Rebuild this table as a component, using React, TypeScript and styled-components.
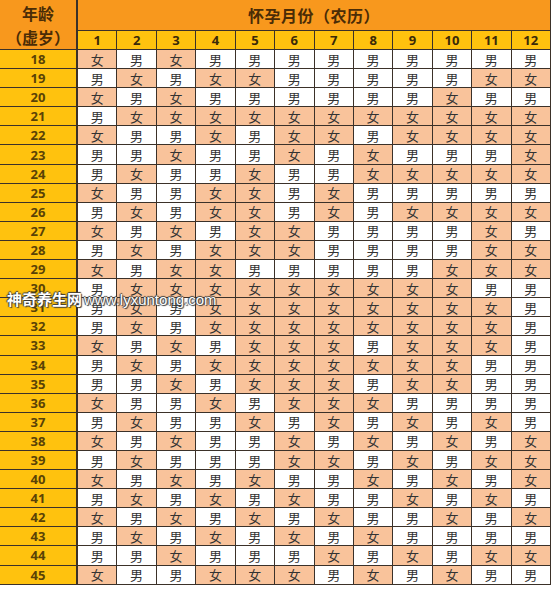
import React from "react";
import styled, { createGlobalStyle } from "styled-components";

const GlobalStyle = createGlobalStyle`
  html, body {
    margin: 0;
    padding: 0;
    background: #ffffff;
  }
  body {
    font-family: "Noto Sans CJK SC", "Noto Sans", sans-serif;
  }
`;

// F = 女, M = 男 — one string per age, months 1..12
const chart: [number, string][] = [
  [18, "FMFMMMMMMMMM"],
  [19, "MFMFFMMMMMFF"],
  [20, "FMFMMMMMMFMM"],
  [21, "MFFFFFFFFFFF"],
  [22, "FMMFMFFMFFFF"],
  [23, "MMFMMFMFMMMF"],
  [24, "MFMMFMMFFFFF"],
  [25, "FMMFFMFMMMMM"],
  [26, "MFMFFMFMFFFF"],
  [27, "FMFMFFMMMMFM"],
  [28, "MFMFFFMMMMFF"],
  [29, "FMFFMMMMMFFF"],
  [30, "MFFFFFFFFFMM"],
  [31, "MFMFFFFFFFFM"],
  [32, "MFMFFFFFFFFM"],
  [33, "FMFMFFFMFFFM"],
  [34, "MFMFFFFFFFMM"],
  [35, "MMFMFFFMFFMM"],
  [36, "FMMFMFFFMMMM"],
  [37, "MFMMFMFMFMFM"],
  [38, "FMFMMFMFMFMF"],
  [39, "MFMMMFFMFMFF"],
  [40, "FMFMFMMFMFMF"],
  [41, "MFMFMFMMFMFM"],
  [42, "FMFMFMFMMFMF"],
  [43, "MFMFMFMFMMMM"],
  [44, "MMFMMMFMFMFF"],
  [45, "FMMFFFMFMFMM"],
];

const months = [1, 2, 3, 4, 5, 6, 7, 8, 9, 10, 11, 12];

const Page = styled.div`
  position: relative;
  width: 551px;
  height: 589px;
  overflow: hidden;
`;

const Chart = styled.div`
  display: grid;
  grid-template-columns: 77px repeat(12, 1fr);
  grid-template-rows: 30px 18px;
  grid-auto-rows: 18.1px;
  gap: 1px;
  background: #3b3129;
  border: 1px solid #3b3129;
  border-top: none;
  border-left: none;
  width: 551px;
  box-sizing: border-box;
`;

const AgeHead = styled.div`
  grid-row: span 2;
  background: #f8981d;
  display: flex;
  flex-direction: column;
  align-items: center;
  justify-content: space-between;
  padding: 3px 0 2px;
  color: #4a2c06;
  font-weight: 700;
  font-size: 16px;
  line-height: 20px;
  border-right: 1px solid #3b3129;
`;

const Title = styled.div`
  grid-column: span 12;
  background: #f8981d;
  display: flex;
  align-items: center;
  justify-content: center;
  color: #4a2c06;
  font-weight: 700;
  font-size: 16px;
  letter-spacing: 0.5px;
`;

const Month = styled.div`
  background: #ffc20e;
  display: flex;
  align-items: center;
  justify-content: center;
  color: #3a2a08;
  font-family: "Open Sans", "Liberation Sans", sans-serif;
  font-weight: 700;
  font-size: 13px;
`;

const Age = styled.div`
  background: #ffc20e;
  display: flex;
  align-items: center;
  justify-content: center;
  color: #5a4206;
  font-family: "Open Sans", "Liberation Sans", sans-serif;
  font-weight: 700;
  font-size: 13px;
  border-right: 1px solid #3b3129;
`;

const Cell = styled.div<{ $girl: boolean }>`
  background: ${(p) => (p.$girl ? "#f9c39b" : "#ffffff")};
  display: flex;
  align-items: center;
  justify-content: center;
  color: #333333;
  font-size: 13px;
  line-height: 1;
`;

const Watermark = styled.div`
  position: absolute;
  left: 7px;
  top: 288px;
  color: #ffffff;
  font-size: 15px;
  font-weight: 700;
  white-space: nowrap;
  text-shadow: 1px 1px 1px #3a3a3a, -1px 0 1px #3a3a3a, 0 -1px 1px #3a3a3a;
  & span {
    font-family: "Liberation Sans", sans-serif;
    font-weight: 400;
    font-size: 15px;
    margin-left: 2px;
  }
`;

export default function App() {
  return (
    <Page>
      <GlobalStyle />
      <Chart>
        <AgeHead>
          <div>年龄</div>
          <div>（虚岁）</div>
        </AgeHead>
        <Title>怀孕月份（农历）</Title>
        {months.map((m) => (
          <Month key={m}>{m}</Month>
        ))}
        {chart.map(([age, row]) => (
          <React.Fragment key={age}>
            <Age>{age}</Age>
            {row.split("").map((c, i) => (
              <Cell key={i} $girl={c === "F"}>
                {c === "F" ? "女" : "男"}
              </Cell>
            ))}
          </React.Fragment>
        ))}
      </Chart>
      <Watermark>
        神奇养生网<span>www.lyxuntong.com</span>
      </Watermark>
    </Page>
  );
}
